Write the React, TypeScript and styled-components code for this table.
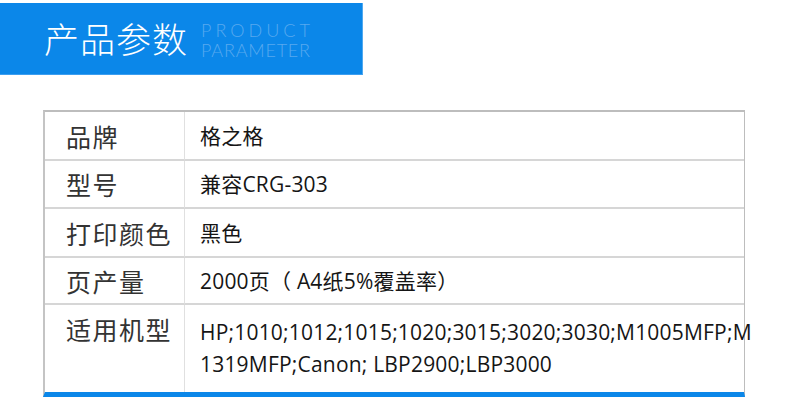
import React from "react";
import styled, { createGlobalStyle } from "styled-components";

const Global = createGlobalStyle`
  html, body { margin: 0; padding: 0; background: #fff; }
  body { font-family: "Noto Sans CJK SC", "Open Sans", sans-serif; }
`;

const Page = styled.div`
  width: 786px;
  height: 415px;
  padding-top: 3px;
  box-sizing: border-box;
`;

const Banner = styled.div`
  width: 363px;
  height: 72px;
  background: #0b87e9;
  border-right: 1px solid #4fa9f0;
  border-bottom: 1px solid #3c9ef0;
  box-sizing: border-box;
  display: flex;
  align-items: center;
  padding-left: 44px;
  gap: 13px;
`;

const BannerTitle = styled.div`
  color: #fff;
  font-family: "Noto Sans CJK SC", sans-serif;
  font-weight: 300;
  font-size: 35px;
  letter-spacing: 1px;
  line-height: 40px;
  margin-top: -2px;
`;

const BannerSub = styled.div`
  display: flex;
  flex-direction: column;
  color: #58a9ef;
  font-family: "Lato", "Open Sans", sans-serif;
  font-weight: 300;
  font-size: 18px;
  line-height: 20px;
  margin-top: 2px;
`;

const SubLine = styled.span<{ $spacing: number }>`
  letter-spacing: ${(p) => p.$spacing}px;
  white-space: nowrap;
`;

const Table = styled.div`
  margin: 35px 0 0 43px;
  width: 702px;
  border-top: 2px solid #bdbdbd;
  border-left: 2px solid #c4c4c4;
  border-right: 1px solid #bdbdbd;
  border-bottom: 5px solid #0b87e9;
  box-sizing: border-box;
  display: grid;
  grid-template-columns: 140px minmax(0, 1fr);
`;

const Label = styled.div<{ $h: number; $last?: boolean; $top?: boolean }>`
  height: ${(p) => p.$h}px;
  box-sizing: border-box;
  border-right: 1px solid #e0e0e0;
  border-bottom: ${(p) => (p.$last ? "none" : "2px solid #d6d6d6")};
  display: flex;
  align-items: ${(p) => (p.$top ? "flex-start" : "center")};
  padding-left: 21px;
  padding-top: ${(p) => (p.$top ? "8px" : "0")};
  font-family: "Noto Sans CJK SC", sans-serif;
  font-size: 25px;
  line-height: 32px;
  color: #333;
  letter-spacing: 1.5px;
`;

const Value = styled.div<{ $h: number; $last?: boolean; $top?: boolean }>`
  height: ${(p) => p.$h}px;
  min-width: 0;
  box-sizing: border-box;
  border-bottom: ${(p) => (p.$last ? "none" : "2px solid #d6d6d6")};
  display: flex;
  flex-direction: column;
  justify-content: ${(p) => (p.$top ? "flex-start" : "center")};
  padding-left: 15px;
  padding-top: ${(p) => (p.$top ? "11px" : "0")};
  font-family: "Open Sans", "Noto Sans CJK SC", sans-serif;
  font-size: 21px;
  letter-spacing: 0.2px;
  line-height: 32px;
  color: #151515;
  white-space: nowrap;
  overflow: visible;
`;

const rows: { label: string; value: React.ReactNode; h: number; top?: boolean }[] = [
  { label: "品牌", value: "格之格", h: 49 },
  { label: "型号", value: "兼容CRG-303", h: 48 },
  { label: "打印颜色", value: "黑色", h: 49 },
  { label: "页产量", value: "2000页（ A4纸5%覆盖率）", h: 47 },
  {
    label: "适用机型",
    value: (
      <>
        <span>HP;1010;1012;1015;1020;3015;3020;3030;M1005MFP;M</span>
        <span>1319MFP;Canon; LBP2900;LBP3000</span>
      </>
    ),
    h: 87,
    top: true,
  },
];

export default function App() {
  return (
    <Page>
      <Global />
      <Banner>
        <BannerTitle>产品参数</BannerTitle>
        <BannerSub>
          <SubLine $spacing={4}>PRODUCT</SubLine>
          <SubLine $spacing={0.8}>PARAMETER</SubLine>
        </BannerSub>
      </Banner>
      <Table>
        {rows.map((r, i) => (
          <React.Fragment key={r.label}>
            <Label $h={r.h} $last={i === rows.length - 1} $top={r.top}>
              {r.label}
            </Label>
            <Value $h={r.h} $last={i === rows.length - 1} $top={r.top}>
              {r.value}
            </Value>
          </React.Fragment>
        ))}
      </Table>
    </Page>
  );
}
